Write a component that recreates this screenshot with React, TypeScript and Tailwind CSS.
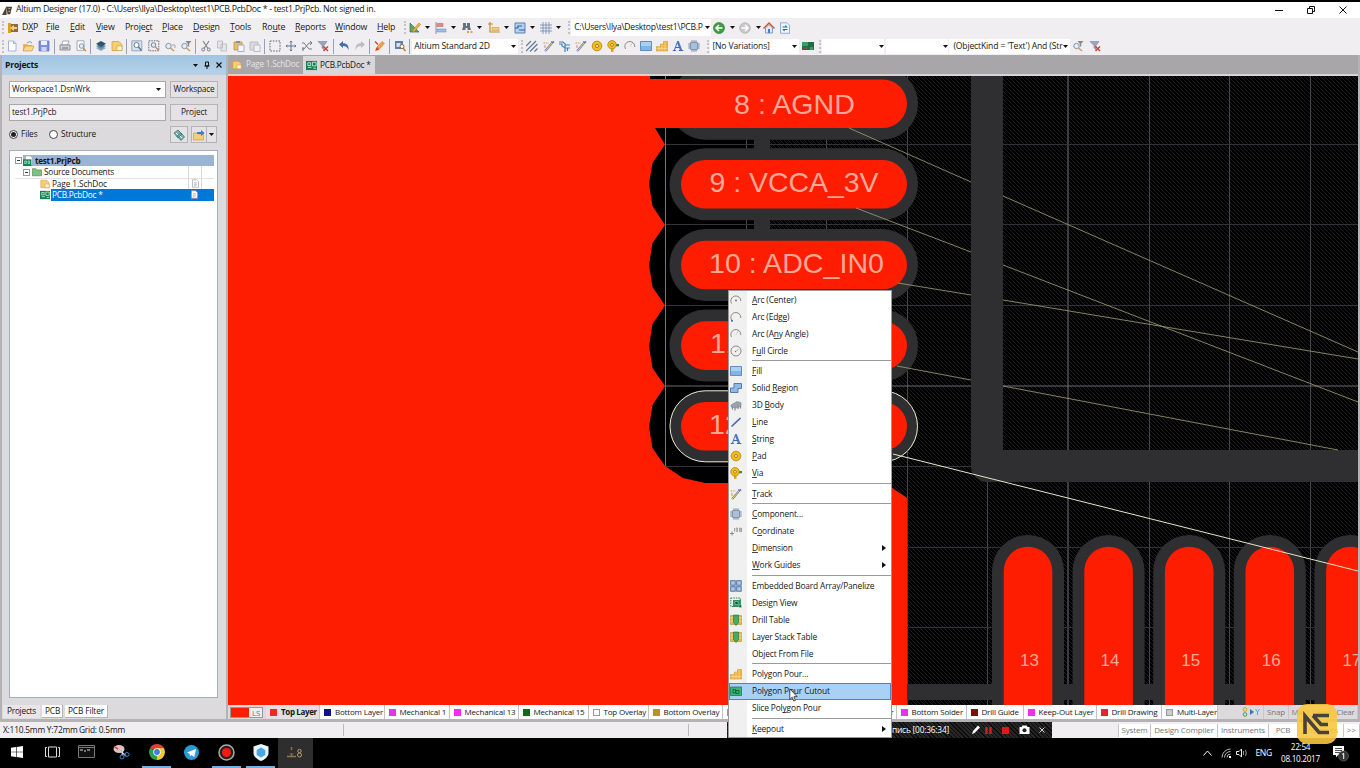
import React from "react";

type Kids = { children?: React.ReactNode };

/* ---------- icon primitives ---------- */

function Ic({ children, s = 12 }: Kids & { s?: number }) {
  return (
    <svg width={s} height={s} viewBox="0 0 12 12" fill="none" className="shrink-0">
      {children}
    </svg>
  );
}

const funnel = <path d="M5.5 1h6l-2.3 2.8v3L7.8 6V3.800z" fill="#888" />;
const mag = (
  <>
    <circle cx="4.500" cy="6" r="2.700" fill="#e3edf7" stroke="#8795a5" />
    <path d="M6.500 8l3.500 3" stroke="#c99f52" strokeWidth="1.500" />
  </>
);

const icons: Record<string, React.ReactNode> = {
  dxp: (
    <>
      <path d="M1 1h3v10H1z" fill="#d8a020" />
      <path d="M4 2h7v8H4z" fill="#8a6a40" />
      <path d="M3 6l4-3v2h3v2H7v2z" fill="#f6d368" />
    </>
  ),
  page: <path d="M2.500 1h5l2.500 2.500V11H2.500zM7.500 1v2.500H10" fill="#fff" stroke="#8ba4cc" strokeWidth=".8" />,
  open: (
    <>
      <path d="M1 4h4l1 1h4v6H1z" fill="#e8b85a" />
      <path d="M3 6h9l-2 5H1z" fill="#f8d98b" stroke="#c48d32" strokeWidth=".6" />
      <path d="M5 3q3-3 5 0" stroke="#6a7fa8" strokeWidth=".8" />
    </>
  ),
  save: (
    <>
      <path d="M1 1h10v10H1z" fill="#7d91dc" stroke="#5f70b8" strokeWidth=".7" />
      <path d="M3 1h6v4H3z" fill="#eef" />
      <path d="M3.500 7h5v4h-5z" fill="#cfd6f4" />
    </>
  ),
  print: (
    <>
      <path d="M4 1h6l-1.500 4h-6z" fill="#fff" stroke="#888" strokeWidth=".7" />
      <path d="M1 5h10v5H1z" fill="#cfd3da" stroke="#6b7078" strokeWidth=".7" />
      <path d="M3 8h6" stroke="#6b7078" />
    </>
  ),
  preview: (
    <>
      <path d="M2 .8h7v9.500H2z" fill="#fff" stroke="#8a97a8" strokeWidth=".8" />
      <circle cx="6.500" cy="6" r="2.300" fill="#dcebf7" stroke="#718098" strokeWidth=".8" />
      <path d="M8 8l3 3" stroke="#b88a4b" strokeWidth="1.300" />
    </>
  ),
  layers: (
    <>
      <path d="M1 8l5-2 5 2-5 3z" fill="#8aa7b9" />
      <path d="M1 6l5-2 5 2-5 3z" fill="#5b8aa5" />
      <path d="M1 3.800L6 1l5 2.800L6 7z" fill="#2f566e" />
    </>
  ),
  sch: (
    <>
      <path d="M1 1.500h7l3 3V10.500H1z" fill="#f6cf74" stroke="#cf9a3c" strokeWidth=".7" />
      <path d="M6 6h5v4.500H6z" fill="#fdf3d6" stroke="#cf9a3c" strokeWidth=".6" />
    </>
  ),
  zoomDoc: (
    <>
      <path d="M.8.8h10v10H.8z" fill="#d5e2f0" stroke="#8499b3" strokeWidth=".8" />
      <circle cx="5.500" cy="5" r="2.500" fill="#fff" stroke="#56708f" strokeWidth=".9" />
      <path d="M7.500 7l3 3.500" stroke="#56708f" strokeWidth="1.300" />
    </>
  ),
  zoomArea: (
    <>
      <path d="M.8.8h10v10H.8z" stroke="#445" strokeWidth=".8" strokeDasharray="1.500 1" />
      <circle cx="5.500" cy="5" r="2.300" fill="#e0eaf4" stroke="#667b92" strokeWidth=".9" />
      <path d="M7.500 7l3 3" stroke="#b88a4b" strokeWidth="1.300" />
    </>
  ),
  zoomSel: (
    <>
      {mag}
      <path d="M8 5h3v3" stroke="#a0a7b0" />
    </>
  ),
  zoomFil: (
    <>
      {mag}
      {funnel}
    </>
  ),
  cut: (
    <>
      <path d="M3 1l5 7.500M9 1L4 8.500" stroke="#7b7f86" strokeWidth="1.100" />
      <circle cx="3.200" cy="9.500" r="1.500" stroke="#7b7f86" />
      <circle cx="8.800" cy="9.500" r="1.500" stroke="#7b7f86" />
    </>
  ),
  copy: <path d="M1.500 1h5v7h-5zM5 4h5.500v7H5z" fill="#e6e6e8" stroke="#b4b6bb" strokeWidth=".8" />,
  paste: (
    <>
      <path d="M1 2h8v8H1z" fill="#e8be66" stroke="#b58a3a" strokeWidth=".7" />
      <path d="M3 1h4v2H3z" fill="#8b8b93" />
      <path d="M5 5h6v6.500H5z" fill="#f4f6fb" stroke="#8b98b0" strokeWidth=".7" />
    </>
  ),
  pasteG: (
    <>
      <path d="M1 2h8v8H1z" fill="#dcdcdf" stroke="#aaacb0" strokeWidth=".7" />
      <path d="M5 5h6v6.500H5z" fill="#f1f1f3" stroke="#a4a7ad" strokeWidth=".7" />
    </>
  ),
  select: <path d="M1 1h10v10H1z" stroke="#556" strokeWidth=".9" strokeDasharray="1.600 1.200" />,
  move: <path d="M6 1v10M1 6h10M4.800 2.300L6 1l1.200 1.300M4.800 9.700L6 11l1.200-1.300M2.300 4.800L1 6l1.300 1.200M9.700 4.800L11 6 9.700 7.200" stroke="#5e7598" strokeWidth="1" />,
  cross: <path d="M1 3h2l5 6h3M1 9h2l5-6h3M9 1l2 2-2 2M2 7v4" stroke="#68727d" strokeWidth=".9" />,
  clearF: (
    <>
      <path d="M1 1.500h9L7 5.500v4L5 8V5.500z" fill="#9ba4be" stroke="#6f7793" strokeWidth=".5" />
      <path d="M6.500 6.500l4.500 4.500M11 6.500L6.500 11" stroke="#d13b3b" strokeWidth="1.400" />
    </>
  ),
  undo: <path d="M1 4.500L5 1v2.200c4 0 6 2.500 5.500 7C9.500 7 8 6 5 6v2z" fill="#3f6fae" />,
  redo: <path d="M11 4.500L7 1v2.200c-4 0-6 2.500-5.500 7C2.500 7 4 6 7 6v2z" fill="#b9bcc2" />,
  pencil: (
    <>
      <path d="M1.500 10.500L3 7l5-5.500 2.500 2L5 9.500z" fill="#f0a73c" stroke="#b5682a" strokeWidth=".5" />
      <path d="M1.500 10.500L3 7l2 2.500z" fill="#d03a2f" />
      <path d="M1 1.500l3 3" stroke="#d03a2f" strokeWidth="1.200" />
    </>
  ),
  browse: (
    <>
      <path d="M1 1h8v8H1z" fill="#5c7fae" />
      <path d="M2.500 3h4v4h-4z" fill="#d6e4f4" />
      <circle cx="8" cy="6.500" r="2" fill="#fff" stroke="#8a6a3a" />
      <path d="M9 8l2.500 3" stroke="#b07a2e" strokeWidth="1.300" />
    </>
  ),
  ruler: (
    <>
      <path d="M1 1v9h9z" fill="#62a86b" stroke="#2f6d45" strokeWidth=".7" />
      <path d="M3 9l7-8 1.500 1.500L5 10z" fill="#f1b13c" stroke="#9a6a1f" strokeWidth=".5" />
    </>
  ),
  align: (
    <>
      <path d="M1 0v12" stroke="#778" strokeWidth=".8" />
      <path d="M2 1.500h6v3H2z" fill="#e38b8b" stroke="#b65858" strokeWidth=".5" />
      <path d="M2 7h9v3H2z" fill="#9fc0e8" stroke="#5f84b5" strokeWidth=".5" />
    </>
  ),
  binoc: (
    <>
      <path d="M2 1h3v3h1V1h3v4l1 3H6.500V6h-2v2H1l1-3z" fill="#64707e" />
      <path d="M6 9h2v2H6zM9.500 9h2v2h-2z" fill="#e0a33b" />
    </>
  ),
  dim: (
    <>
      <path d="M2 0v10h10" stroke="#c58a32" strokeWidth="1.200" />
      <path d="M0 2h5" stroke="#c58a32" />
      <path d="M4 5.500h7v3H4z" fill="#f4cb75" stroke="#c58a32" strokeWidth=".5" />
    </>
  ),
  room: (
    <>
      <path d="M1 1h10v10H1z" fill="#b4d2f0" stroke="#5c82b0" />
      <path d="M1 6h3V4h4M5 8h6" stroke="#336198" strokeWidth="1.100" />
    </>
  ),
  grid: <path d="M3 0v12M6 0v12M9 0v12M0 3h12M0 6h12M0 9h12" stroke="#7791b5" strokeWidth=".9" />,
  back: (
    <>
      <circle cx="6" cy="6" r="5.500" fill="#3f9e42" stroke="#22702a" strokeWidth=".6" />
      <path d="M6 3L3 6l3 3M3 6h6.500" stroke="#fff" strokeWidth="1.500" />
    </>
  ),
  fwd: (
    <>
      <circle cx="6" cy="6" r="5.300" fill="#c9c9cc" stroke="#a4a4a8" strokeWidth=".6" />
      <path d="M6 3l3 3-3 3M9 6H2.500" stroke="#fff" strokeWidth="1.500" />
    </>
  ),
  home: (
    <>
      <path d="M2.500 6v5h7V6L6 2.500z" fill="#dfe9f8" stroke="#5a7bb0" strokeWidth=".7" />
      <path d="M.5 6.500L6 1l5.500 5.500" stroke="#c85a32" strokeWidth="1.400" />
      <path d="M5 7h2v4H5z" fill="#3f7fd0" />
    </>
  ),
  refresh: (
    <>
      <path d="M1.500.8h6.500l2.500 2.500v8h-9z" fill="#eef4fc" stroke="#7d9cc8" strokeWidth=".8" />
      <path d="M3.500 5h4l-1-1.500M8.500 7.500h-4l1 1.500" stroke="#2d67b8" strokeWidth="1.200" />
    </>
  ),
  hatch: <path d="M0 6L5 1M0 11L10 1M4 11.500L11.500 4M8.500 11.500L11.500 8.500" stroke="#5d7799" strokeWidth="1.200" />,
  track: (
    <>
      <path d="M.5 3h5" stroke="#cf9b2f" strokeDasharray="1.500 .8" />
      <path d="M2 11l2-2 5-6 2-1.500" stroke="#6d7f99" strokeWidth="2" />
      <path d="M2 11l2-2 5-6" stroke="#eccb68" strokeWidth="1" />
      <path d="M8 1l1 1M2 5v3" stroke="#cf9b2f" />
    </>
  ),
  diff: <path d="M0 2h4l3 3h4M0 4h3v2l3 2h5M6 5v7M8.500 8v3" stroke="#3f84c0" strokeWidth="1.200" />,
  pad: (
    <>
      <circle cx="6" cy="6" r="4.800" fill="#f4bf1e" stroke="#b07d08" strokeWidth=".8" />
      <circle cx="6" cy="6" r="1.700" fill="#fbe08a" stroke="#a06f08" strokeWidth=".8" />
    </>
  ),
  via: (
    <>
      <path d="M7 4h5v2.300H7z" fill="#3d8c3d" />
      <path d="M4 7h2.500v5H4z" fill="#e5a813" />
      <circle cx="5" cy="4.800" r="4.200" fill="#f4bf1e" stroke="#b07d08" strokeWidth=".8" />
      <circle cx="5" cy="4.800" r="1.500" fill="#fbe08a" stroke="#a06f08" strokeWidth=".8" />
    </>
  ),
  arcC: (
    <>
      <path d="M1.500 9.500A5 5 0 1 1 10.800 7" stroke="#8c7a6c" strokeWidth=".9" />
      <circle cx="6" cy="6.500" r="1" fill="#777" />
    </>
  ),
  arcE: (
    <>
      <path d="M1.500 9A5 5 0 1 1 10.800 7" stroke="#8c7a6c" strokeWidth=".9" />
      <circle cx="2" cy="9.800" r="1.100" fill="#456fb0" />
    </>
  ),
  arcA: (
    <>
      <path d="M1.500 9A5 5 0 1 1 10.800 7" stroke="#8c7a6c" strokeWidth=".9" />
      <path d="M6 6.500L8.500 3" stroke="#999" strokeWidth=".7" strokeDasharray="1 .8" />
    </>
  ),
  circle: (
    <>
      <circle cx="6" cy="6" r="5" stroke="#8c7a6c" strokeWidth=".9" />
      <path d="M6 6.500l2.500-2.500" stroke="#999" strokeWidth=".8" />
      <circle cx="5.500" cy="6.500" r=".7" fill="#777" />
    </>
  ),
  fill: (
    <>
      <path d="M.5 1.500h11v9H.5z" fill="#7fb5ea" stroke="#4a7bb3" strokeWidth=".8" />
      <path d="M1 2h10v4H1z" fill="#a9cff3" />
    </>
  ),
  region: <path d="M4 1.500h7.500v5H8v4H.5V6H4z" fill="#8dbbe9" stroke="#4a6fa3" strokeWidth=".9" />,
  body: (
    <>
      <path d="M1 6l6-3.500 4 1.200v3.500L6 9 1 8z" fill="#97a3af" stroke="#717c87" strokeWidth=".5" />
      <path d="M2.500 8v2.500M5 8.500v3M8 7.500V10M10.500 7v2.500" stroke="#7f8b97" strokeWidth="1.200" />
    </>
  ),
  line: <path d="M1.500 10.500L10.500 2" stroke="#4665a5" strokeWidth="1.700" />,
  string: (
    <>
      <path d="M5.200 1h1.600l3.600 9.500H8L5.300 3.500 2.900 10.500H1.700z" fill="#4f78c4" />
      <path d="M.8 10.500h3M6.800 10.500h4.500M3.500 7.500h4.500" stroke="#3f65b5" strokeWidth="1.100" />
    </>
  ),
  comp: (
    <>
      <path d="M2.500 2.500h7v7h-7z" fill="#a8c0dc" stroke="#7189a6" strokeWidth=".8" />
      <path d="M4 .3v1.900M6 .3v1.900M8 .3v1.900M4 9.800v1.900M6 9.800v1.900M8 9.800v1.900M.3 4h1.900M.3 6h1.900M.3 8h1.900M9.800 4h1.900M9.800 6h1.900M9.800 8h1.900" stroke="#5d7691" strokeWidth=".9" />
    </>
  ),
  coord: (
    <>
      <path d="M0 8.500h4M2 6.500v4" stroke="#777" strokeWidth=".8" />
      <path d="M4.500 3v3.500M6.200 3v3.500h1.300V3zM10.800 3v3.500H9.500V3zM11.500 3v4" stroke="#888" strokeWidth=".7" />
    </>
  ),
  array: (
    <>
      {[0.7, 6.7].map((x) =>
        [0.7, 6.7].map((y) => (
          <rect key={`${x}${y}`} x={x} y={y} width="4.500" height="4.500" fill="#a9c8ea" stroke="#486a96" strokeWidth=".9" />
        ))
      )}
    </>
  ),
  view: (
    <>
      <path d="M.8 1h9.500v8.500H.8z" stroke="#2a6b47" strokeWidth=".9" strokeDasharray="1.500 1" />
      <path d="M3 3h8v7H3z" fill="#2f9361" />
      <path d="M5 4.500h3v3H5zM9 8h2.500v2.500H9z" fill="#0f5233" stroke="#bfe8ce" strokeWidth=".5" />
    </>
  ),
  drill: (
    <>
      <path d="M.5 1.500h11v9H.5z" fill="#e9b548" stroke="#b28125" strokeWidth=".5" />
      <path d="M.5 4h11M.5 7h11" stroke="#fff0c0" strokeWidth=".7" />
      <path d="M3.500 1h5v7.500L6 11.500 3.500 8.500z" fill="#45ad62" stroke="#1e6c38" strokeWidth=".6" />
    </>
  ),
  pour: (
    <>
      <path d="M.5 6.500h4V4h3V1.500h4v9.500H.5z" fill="#f0b440" stroke="#c48a24" strokeWidth=".5" />
      <path d="M3 6v5M6 4v7M9 2v9M.5 8.500h11" stroke="#fbdc97" strokeWidth=".7" />
    </>
  ),
  cutout: (
    <>
      <path d="M.5 2h11v8.500H.5z" fill="#39b377" stroke="#1d7c4b" strokeWidth=".8" />
      <path d="M3 4.500h2.500v3.500H3zM6 5.500h3v3H6z" stroke="#0e5c33" strokeWidth=".8" />
    </>
  ),
  pcb: (
    <>
      <path d="M0 1h12v10H0z" fill="#128255" />
      <path d="M2 3h3v3H2zM7 2.500h4v4H7zM2 8h4M8 9h3" stroke="#d6f2df" strokeWidth=".9" />
    </>
  ),
  pcb2: (
    <>
      <path d="M0 2h12v8H0z" fill="#1f6c49" />
      <path d="M0 2h6v4H0zM8 7h3v3H8z" fill="#3f9b66" />
      <path d="M1 8h5" stroke="#b04545" />
    </>
  ),
  prj: (
    <>
      <path d="M3 0h6l2 2v9H3z" fill="#fff" stroke="#7ba48b" strokeWidth=".7" />
      <path d="M0 4h10v8H0z" fill="#128255" />
      <path d="M2 6h2v3H2zM6 6h2v3H6z" stroke="#d6f2df" strokeWidth=".8" />
    </>
  ),
  folder: <path d="M.5 2h4l1 1.500h6V10.500H.5z" fill="#7fc083" stroke="#4c8a52" strokeWidth=".8" />,
  doc: <path d="M2 1h5.500L10 3.500V11H2zM4 5h4M4 7h4M4 9h3" fill="#fff" stroke="#8d97a8" strokeWidth=".8" />,
  docR: <path d="M2 1h5.500L10 3.500V11H2zM4 5h4M4 7h4M4 9h3" fill="#fff" stroke="#e07878" strokeWidth=".8" />,
  links: (
    <>
      <path d="M1 4l4-3 4 4-4 4zM4 7l4-3 3.500 4L8 11.500z" fill="#7eb0a8" stroke="#2f7a78" strokeWidth=".8" />
      <path d="M3 4l2 2M7 7l2 2" stroke="#fff" />
    </>
  ),
  openTo: (
    <>
      <path d="M.5 4h4l1 1h5v6h-10z" fill="#f3cf7d" stroke="#c4923c" strokeWidth=".6" />
      <path d="M4 3h4V1l3.500 3L8 7V5H4z" fill="#3a7ad0" />
    </>
  ),
};

const I = ({ n, s }: { n: string; s?: number }) => <Ic s={s}>{icons[n]}</Ic>;

/* ---------- small layout pieces ---------- */

const Slot = ({ n }: { n: string }) => (
  <div className="flex w-[16.2px] shrink-0 justify-center">
    <I n={n} />
  </div>
);
const Sep = () => <div className="ml-[1px] mr-[2px] h-[15px] w-px shrink-0 bg-[#8fa3ba]" />;
const Grip = () => <div className="h-[13px] w-[3px] shrink-0 border-l-2 border-dotted border-[#c4c2c4]" />;
const Arrow = () => (
  <svg width="5" height="3" viewBox="0 0 5 3" className="shrink-0">
    <path d="M0 0h5L2.500 3z" fill="#111" />
  </svg>
);

/* "&" precedes the accelerator letter */
function Mn({ t }: { t: string }) {
  const i = t.indexOf("&");
  if (i < 0) return <>{t}</>;
  return (
    <>
      {t.slice(0, i)}
      <span className="underline decoration-[#444] decoration-1 underline-offset-1 [text-decoration-skip-ink:none]">{t[i + 1]}</span>
      {t.slice(i + 2)}
    </>
  );
}

/* ---------- top bars ---------- */

function TitleBar() {
  return (
    <div className="flex h-[16px] shrink-0 items-center bg-white pl-[2px] pr-[13px]">
      <Ic s={11}>
        <path d="M0 11L5 1v10zM5 2h6L9 10H6z" fill="#4a4238" />
        <path d="M7 4h2M7 7h2" stroke="#d8c089" />
      </Ic>
      <span className="ml-[3px] text-[8.800px] tracking-[-0.29px]">
        Altium Designer (17.0) - C:\Users\Ilya\Desktop\test1\PCB.PcbDoc * - test1.PrjPcb. Not signed in.
      </span>
      <div className="ml-auto flex items-center gap-[24px]">
        <svg width="8" height="8"><path d="M0 4.500h8" stroke="#111" /></svg>
        <svg width="8" height="8" fill="none"><path d="M.5 2.500h5v5h-5zM2.500 2.500v-2h5v5h-2" stroke="#111" /></svg>
        <svg width="8" height="8"><path d="M.5.5l7 7M7.500.5l-7 7" stroke="#111" /></svg>
      </div>
    </div>
  );
}

function MenuBar() {
  return (
    <div className="flex h-[19px] shrink-0 items-center bg-[#f0eef0] pl-[2px] text-[8.800px] tracking-[-0.18px]">
      <Grip />
      <div className="ml-[2px] mr-[3px]"><I n="dxp" /></div>
      <span className="w-[24px]"><Mn t="D&XP" /></span>
      <span className="w-[24px]"><Mn t="&File" /></span>
      <span className="w-[26px]"><Mn t="&Edit" /></span>
      <span className="w-[29px]"><Mn t="&View" /></span>
      <span className="w-[37px]"><Mn t="Proje&ct" /></span>
      <span className="w-[31px]"><Mn t="&Place" /></span>
      <span className="w-[37px]"><Mn t="&Design" /></span>
      <span className="w-[32px]"><Mn t="&Tools" /></span>
      <span className="w-[33px]"><Mn t="Ro&ute" /></span>
      <span className="w-[40px]"><Mn t="&Reports" /></span>
      <span className="w-[42px]"><Mn t="&Window" /></span>
      <span className="w-[27px]"><Mn t="&Help" /></span>
      <Grip />
      {["ruler", "align", "binoc", "dim", "room", "grid"].map((n) => (
        <div key={n} className="flex w-[26.2px] shrink-0 items-center gap-[4px] pl-[2px]">
          <I n={n} />
          <Arrow />
        </div>
      ))}
      <div className="ml-[4px]"><Grip /></div>
      <div className="flex h-[17px] w-[140px] shrink-0 items-center justify-between bg-white pl-[3px] pr-[1px]">
        <span className="whitespace-nowrap text-[8.600px] tracking-[-0.24px]">C:\Users\Ilya\Desktop\test1\PCB.P</span>
        <Arrow />
      </div>
      <div className="ml-[2px] flex items-center gap-[4.500px]">
        <I n="back" />
        <Arrow />
        <I n="fwd" />
        <Arrow />
        <div className="-ml-[2px] -mr-[1px]"><I n="home" /></div>
        <I n="refresh" />
      </div>
    </div>
  );
}

function ToolBar() {
  return (
    <div className="flex h-[18px] shrink-0 items-center bg-[#f0eef0] pl-[2px] text-[8.600px] tracking-[-0.15px]">
      <div className="mr-[-1px]"><Grip /></div>
      <Slot n="page" /><Slot n="open" /><Slot n="save" /><Sep />
      <Slot n="print" /><Slot n="preview" /><Sep />
      <Slot n="layers" /><Slot n="sch" /><Sep />
      <Slot n="zoomDoc" /><Slot n="zoomArea" /><Slot n="zoomSel" /><Slot n="zoomFil" /><Sep />
      <Slot n="cut" /><Slot n="copy" /><Slot n="paste" /><Slot n="pasteG" /><Sep />
      <Slot n="select" /><Slot n="move" /><Slot n="cross" /><Slot n="clearF" /><Sep />
      <Slot n="undo" /><Slot n="redo" /><Sep />
      <Slot n="pencil" /><Sep />
      <Slot n="browse" /><Sep />
      <div className="flex h-[15px] w-[106px] shrink-0 items-center justify-between bg-white pl-[2px] pr-[2px]">
        <span>Altium Standard 2D</span>
        <Arrow />
      </div>
      <div className="ml-[3px]"><Grip /></div>
      <Slot n="hatch" /><Slot n="track" /><Slot n="diff" /><Slot n="track" /><Slot n="pad" /><Slot n="via" />
      <Slot n="arcA" /><Slot n="fill" /><Slot n="pour" /><Slot n="string" /><Slot n="comp" />
      <div className="ml-[5px]"><Grip /></div>
      <div className="flex h-[15px] w-[89px] shrink-0 items-center justify-between bg-white pl-[2px] pr-[2px]">
        <span>[No Variations]</span>
        <Arrow />
      </div>
      <div className="ml-[3px]"><I n="pcb2" /></div>
      <div className="ml-[5px]"><Grip /></div>
      <div className="flex h-[15px] w-[62px] shrink-0 items-center justify-end bg-white pr-[0px]"><Arrow /></div>
      <div className="ml-[2px] flex h-[15px] w-[62px] shrink-0 items-center justify-end bg-white pr-[0px]"><Arrow /></div>
      <div className="ml-[1px] flex h-[15px] w-[121px] shrink-0 items-center justify-between bg-white pl-[4px] pr-[2px]">
        <span className="whitespace-nowrap">(ObjectKind = 'Text') And (Str</span>
        <Arrow />
      </div>
      <Slot n="zoomFil" /><Slot n="clearF" />
    </div>
  );
}

/* ---------- projects panel ---------- */

const boxBtn = "flex items-center justify-center border border-[#b5b3b5] bg-[#e4e2e4]";

function Radio({ on }: { on?: boolean }) {
  return (
    <span className="flex size-[9px] shrink-0 items-center justify-center rounded-full border border-[#444] bg-white">
      {on && <span className="size-[5px] rounded-full bg-[#222]" />}
    </span>
  );
}

function Minus() {
  return (
    <span className="flex size-[7px] shrink-0 items-center justify-center border border-[#999] bg-white">
      <span className="h-px w-[3px] bg-[#333]" />
    </span>
  );
}

function Tail({ n }: { n?: string }) {
  return (
    <div className="ml-auto flex h-full w-[26px] shrink-0 border-l border-[#d8d8d8]">
      <div className="flex h-full w-[13px] items-center justify-center border-r border-[#d8d8d8]">{n && <I n={n} s={9} />}</div>
    </div>
  );
}

function Projects() {
  return (
    <div className="flex w-[228px] shrink-0 flex-col border-l-2 border-r-2 border-[#b4b2b4] bg-[#dcdadc] text-[8.300px] tracking-[-0.12px]">
      <div className="flex h-[20px] shrink-0 items-center bg-gradient-to-b from-[#9fc5e2] to-[#b7d2e7] pl-[3px] pr-[4px]">
        <span className="text-[8.600px] font-bold tracking-[-0.2px]">Projects</span>
        <div className="ml-auto flex items-center gap-[6px]">
          <Arrow />
          <svg width="6" height="8" fill="none"><path d="M1.500 1h3v4h-3zM.5 5h5M3 5v3" stroke="#111" /></svg>
          <svg width="6" height="6"><path d="M.5.5l5 5M5.500.5l-5 5" stroke="#111" strokeWidth="1.200" /></svg>
        </div>
      </div>
      <div className="flex min-h-0 flex-1 flex-col pl-[7px] pr-[8px] pt-[6px]">
        <div className="flex h-[17px] gap-[4px]">
          <div className="flex w-[157px] items-center justify-between border border-[#a9a7a9] bg-white pl-[2px] pr-[4px]">
            Workspace1.DsnWrk <Arrow />
          </div>
          <div className={`w-[48px] tracking-[-0.2px] ${boxBtn}`}>Workspace</div>
        </div>
        <div className="mt-[6px] flex h-[17px] gap-[4px]">
          <div className="flex w-[157px] items-center border border-[#a9a7a9] bg-[#f3f1f3] pl-[2px]">test1.PrjPcb</div>
          <div className={`w-[48px] ${boxBtn}`}>Project</div>
        </div>
        <div className="mt-[5px] flex h-[17px] items-center">
          <Radio on />
          <span className="ml-[3px] w-[28px]">Files</span>
          <Radio />
          <span className="ml-[3px] w-[109px]">Structure</span>
          <div className={`h-[17px] w-[18px] ${boxBtn}`}><I n="links" /></div>
          <div className={`ml-[3px] h-[17px] w-[16px] ${boxBtn}`}><I n="openTo" /></div>
          <div className={`-ml-px h-[17px] w-[11px] ${boxBtn}`}><Arrow /></div>
        </div>
        <div className="mt-[7px] h-[548px] border border-[#9fb0c4] bg-white py-[4px] pl-[5px] pr-[3px]">
          <div className="flex h-[11.400px] items-center">
            <Minus />
            <div className="ml-[1px] flex h-full flex-1 items-center bg-[#9bb4d4]">
              <I n="prj" s={10} />
              <span className="ml-[2px] text-[8.100px] font-bold tracking-[-0.25px]">test1.PrjPcb</span>
            </div>
          </div>
          <div className="flex h-[11.400px] items-center pl-[8px]">
            <Minus />
            <div className="ml-[2px]"><I n="folder" s={10} /></div>
            <span className="ml-[2px] tracking-[-0.2px]">Source Documents</span>
            <Tail />
          </div>
          <div className="flex h-[11.400px] items-center border-t border-[#e2e2e2] pl-[25px]">
            <I n="sch" s={10} />
            <span className="ml-[2px]">Page 1.SchDoc</span>
            <Tail n="doc" />
          </div>
          <div className="flex h-[11.400px] items-center pl-[25px]">
            <I n="pcb" s={10} />
            <div className="ml-px flex h-full flex-1 items-center bg-[#0078d7] text-white">
              <span className="ml-[1px] tracking-[-0.25px]">PCB.PcbDoc *</span>
              <div className="ml-auto mr-[15px]"><I n="docR" s={9} /></div>
            </div>
          </div>
        </div>
        <div className="-ml-[6px] mt-[7px] flex h-[13px] items-stretch gap-[2px] leading-[12px]">
          <div className="w-[37px] bg-[#e8e6e8] pl-[4px] tracking-[-0.25px]">Projects</div>
          <div className="w-[21px] border-b border-r border-[#b5b3b5] bg-white pl-[3px]">PCB</div>
          <div className="w-[43px] border-b border-r border-[#b5b3b5] bg-white pl-[3px]">PCB Filter</div>
        </div>
      </div>
    </div>
  );
}

/* ---------- PCB drawing ---------- */

const rows = [103.7, 184.3, 265, 345.6, 426.3];
const cols = [1028, 1108.6, 1189.2, 1269.8, 1350.4];

function Board() {
  return (
    <svg viewBox="228 76 1130 629" width="1130" height="629" className="block shrink-0" fontFamily="'Liberation Sans', Arial, sans-serif">
      <defs>
        <pattern id="hatch" width="4" height="4" patternUnits="userSpaceOnUse">
          <path d="M-1 -1L5 5M3 -1l2 2M-1 3l2 2" stroke="#232326" strokeWidth=".8" />
        </pattern>
      </defs>
      <rect x="228" y="76" width="1130" height="629" fill="#000" />
      <rect x="770" y="76" width="588" height="629" fill="url(#hatch)" />
      <path d="M746.500 76v400M826.500 76v400M907.500 76v629M987.500 76v629M1149.500 76v629M1229.500 76v629M1310.500 76v629" stroke="#46464a" />
      <path d="M1068 76v629" stroke="#55555a" strokeWidth="1.400" />
      <path d="M665 144.500h693M665 224.500h693M665 305.500h693M665 466.500h693M907 547.500h451M907 627.500h451" stroke="#333339" />
      <path d="M665 386h693" stroke="#6a6a6e" strokeWidth="1.200" />
      <rect x="754" y="76" width="16" height="400" fill="#2f2f31" />
      <path d="M987 76V466H1358" fill="none" stroke="#2f2f31" strokeWidth="32" strokeLinejoin="round" />
      <rect x="907" y="684" width="451" height="16" fill="#2f2f31" />

      {rows.map((y) => (
        <rect key={y} x="669.500" y={y - 36} width="248.500" height="72" rx="36" fill="#2f2f31" />
      ))}
      {cols.map((x) => (
        <path key={x} d={`M${x - 36} 705V571a36 36 0 0 1 72 0V705z`} fill="#2f2f31" />
      ))}

      <path
        d="M228 76H650V79H700V128H655L665 144.500 652.500 163 649 184 652.500 206 665 225 652.500 243 649 265 652.500 287 665 305.500 652.500 324 649 346 652.500 368 665 386 652.500 405 649 427 652.500 448 665 466 683 478 705 483H885L907 498V705H228z"
        fill="#ff1d00"
      />
      <path d="M665.500 76v3M665.500 128v338" stroke="#77777b" />

      {rows.map((y) => (
        <rect key={y} x="681" y={y - 24.3} width="226" height="48.600" rx="24.300" fill="#ff1d00" />
      ))}
      <rect x="681" y="79.400" width="40" height="48.600" fill="#ff1d00" />
      {cols.map((x) => (
        <path key={x} d={`M${x - 24.3} 705V571a24.300 24.300 0 0 1 48.600 0V705z`} fill="#ff1d00" />
      ))}
      <rect x="670" y="390.800" width="247.500" height="71" rx="35.500" fill="none" stroke="#e8e8c8" />

      <g stroke="#a3a276" strokeWidth=".8">
        <path d="M849 128L971 182M1003 196L1358 352" />
        <path d="M856 208L971 252M1003 265L1358 402" />
        <path d="M898 283L971 295M1003 300L1358 359" />
        <path d="M897 366L971 380M1003 386L1338 450" />
      </g>
      <path d="M893 454L1358 571" stroke="#e4e4c4" />

      <g fill="#ffa898" fontSize="28.500">
        <text x="734" y="113.500" textLength="121" lengthAdjust="spacingAndGlyphs">8 : AGND</text>
        <text x="709.500" y="191.500" textLength="169" lengthAdjust="spacingAndGlyphs">9 : VCCA_3V</text>
        <text x="709" y="273" textLength="175" lengthAdjust="spacingAndGlyphs">10 : ADC_IN0</text>
        <text x="710" y="353" className="[font-kerning:none]">11 : ADC_IN1</text>
        <text x="709" y="434" className="[font-kerning:none]">12 : ADC_IN2</text>
      </g>
      <g fill="#ffa898" fontSize="17">
        {cols.map((x, i) => (
          <text key={x} x={x - 8} y="666">{13 + i}</text>
        ))}
      </g>
    </svg>
  );
}

/* ---------- layer strip ---------- */

const Sw = ({ c }: { c: string }) => <span className={`size-[7px] shrink-0 ${c}`} />;
const ltab = "flex h-full shrink-0 items-center gap-[4px] border-r border-[#c4c2c4] pl-[4px] whitespace-nowrap overflow-hidden";
const gbtn = "flex h-full shrink-0 items-center justify-center whitespace-nowrap border-r border-[#c8c6c8] text-[#777]";

function LayerStrip() {
  return (
    <div className="flex h-[14px] shrink-0 items-center bg-[#dcdadc] text-[8px] tracking-[-0.18px]">
      <div className="ml-[2px] mr-[3px] flex h-[11px] w-[33px] border border-[#999] bg-[#eee]">
        <div className="w-[18px] bg-[#ff1d00]" />
        <span className="pl-[3px] leading-[10px] text-[#777]">LS</span>
      </div>
      <div className={`w-[54px] bg-[#e2e0e2] font-bold tracking-[-0.35px] ${ltab}`}><Sw c="bg-[#ee2a1a]" />Top Layer</div>
      <div className={`w-[64.500px] bg-white ${ltab}`}><Sw c="bg-[#10108a]" />Bottom Layer</div>
      <div className={`w-[65px] bg-white ${ltab}`}><Sw c="bg-[#f02ef0]" />Mechanical 1</div>
      <div className={`w-[69px] bg-white ${ltab}`}><Sw c="bg-[#f02ef0]" />Mechanical 13</div>
      <div className={`w-[70px] bg-white ${ltab}`}><Sw c="bg-[#0a6e12]" />Mechanical 15</div>
      <div className={`w-[60px] bg-white ${ltab}`}><Sw c="border border-[#999] bg-white" />Top Overlay</div>
      <div className={`w-[74px] bg-white ${ltab}`}><Sw c="bg-[#b8941c]" />Bottom Overlay</div>
      <div className={`w-[55px] bg-white ${ltab}`}><Sw c="bg-[#999]" />Top Paste</div>
      <div className={`w-[65px] bg-white ${ltab}`}><Sw c="bg-[#800]" />Bottom Paste</div>
      <div className={`w-[54px] justify-end bg-white pr-[2px] ${ltab}`}>Top Solder</div>
      <div className={`w-[70px] bg-white ${ltab}`}><Sw c="bg-[#f02ef0]" />Bottom Solder</div>
      <div className={`w-[57px] bg-white ${ltab}`}><Sw c="bg-[#7a1010]" />Drill Guide</div>
      <div className={`w-[73px] bg-white ${ltab}`}><Sw c="bg-[#f02ef0]" />Keep-Out Layer</div>
      <div className={`w-[65.500px] bg-white ${ltab}`}><Sw c="bg-[#f01e2e]" />Drill Drawing</div>
      <div className={`w-[56px] bg-white ${ltab}`}><Sw c="border border-[#999] bg-[#ccc]" />Multi-Layer</div>
      <div className="ml-auto flex h-full">
        <div className={`w-[24px] ${gbtn}`}>
          <svg width="19" height="10" viewBox="0 0 19 10" fill="none">
            <circle cx="3" cy="2.500" r="1.800" stroke="#d0a020" />
            <circle cx="3" cy="7.500" r="1.800" stroke="#4a9a4a" />
            <path d="M8 2l4 3-4 3z" fill="#2f78c8" />
            <path d="M13.500 2l2 3 2-3M15.500 5v3" stroke="#6f9fc8" />
          </svg>
        </div>
        <div className={`w-[25px] ${gbtn}`}>Snap</div>
        <div className={`w-[45px] ${gbtn}`}>Mask Level</div>
        <div className={`w-[24px] ${gbtn}`}>Clear</div>
      </div>
    </div>
  );
}

/* ---------- bottom bars ---------- */

function StatusBar() {
  return (
    <div className="flex h-[16px] shrink-0 items-center bg-[#f0eef0] pl-[3px] text-[8.400px] tracking-[-0.22px]">
      <span className="w-[76px] shrink-0 whitespace-nowrap">X:110.5mm Y:72mm</span>
      <span className="w-[264px] shrink-0">Grid: 0.5mm</span>
      <div className="h-[12px] w-[345px] shrink-0 border-l border-[#bbb]" />
      <div className="h-[12px] w-[39px] shrink-0 border-l border-[#bbb]" />
      <div className="flex h-full w-[325px] shrink-0 items-center justify-end bg-[repeating-linear-gradient(45deg,#0c0c0c_0_1px,#262626_1px_3px)] pr-[5px] text-white">
        <span className="mr-[22px] whitespace-nowrap">Запись [00:36:34]</span>
        <svg width="76" height="12" viewBox="0 0 76 12" fill="none">
          <path d="M1 10l1-3 5-5.500 2 2L3.500 9z" fill="#fff" />
          <path d="M15.500 3v7M19.500 3v7" stroke="#e01818" strokeWidth="2.500" />
          <path d="M31 3h7v7h-7z" fill="#e01818" />
          <path d="M48.500 3h2l1-1.500h4l1 1.500h2V10h-10z" fill="#fff" />
          <circle cx="53.500" cy="6.300" r="2" fill="#222" />
          <path d="M68.500 3.500l5 5M73.500 3.500l-5 5" stroke="#ccc" />
        </svg>
      </div>
      <div className="ml-auto flex h-[13px] bg-white text-[8px] leading-[12px] tracking-[-0.12px]">
        <div className={`w-[33px] border-l ${gbtn}`}>System</div>
        <div className={`w-[67px] ${gbtn}`}>Design Compiler</div>
        <div className={`w-[51px] ${gbtn}`}>Instruments</div>
        <div className={`w-[29px] ${gbtn}`}>PCB</div>
        <div className={`w-[46px] ${gbtn}`}>Shortcuts</div>
        <div className={`w-[16px] ${gbtn}`}>&gt;&gt;</div>
      </div>
    </div>
  );
}

function TaskSlot({ children, open, active }: Kids & { open?: boolean; active?: boolean }) {
  return (
    <div className={`flex h-full w-[34.800px] shrink-0 flex-col items-center justify-between ${active ? "bg-[#2e2e2f]" : ""}`}>
      <div className="flex flex-1 items-center">{children}</div>
      <div className={`h-[2px] ${open ? "w-[29px] bg-[#76aede]" : ""}`} />
    </div>
  );
}

function TaskBar() {
  return (
    <div className="flex h-[30px] shrink-0 items-center bg-black text-[9px] text-white">
      <TaskSlot>
        <svg width="12" height="12"><path d="M0 1.700l5-.7v4.700H0zM5.600.9L12 0v5.700H5.600zM0 6.300h5V11l-5-.7zM5.600 6.300H12V12l-6.400-.9z" fill="#fff" /></svg>
      </TaskSlot>
      <TaskSlot>
        <svg width="15" height="12" fill="none"><path d="M3.500 1h8v10h-8zM2 1.500H.5v9H2M13 1.500h1.500v9H13" stroke="#ddd" /></svg>
      </TaskSlot>
      <TaskSlot>
        <svg width="17" height="14" fill="none"><path d="M.5.5h16v12H.5z" fill="#111" stroke="#777" /><path d="M1 2.500h15" stroke="#777" /><path d="M2 5h3M6 6h2M9 5h3" stroke="#ddd" /></svg>
      </TaskSlot>
      <TaskSlot>
        <svg width="17" height="16" fill="none">
          <ellipse cx="6" cy="5" rx="5.500" ry="4" fill="#e5c0c0" />
          <path d="M2 3l7 5" stroke="#c33" strokeWidth="1.500" />
          <path d="M5 5l8 7M10 5l-1 6" stroke="#d0dce8" strokeWidth="1.200" />
          <circle cx="9" cy="13" r="2" stroke="#3f83c8" /><circle cx="14" cy="10.500" r="2" stroke="#3f83c8" />
        </svg>
      </TaskSlot>
      <TaskSlot open>
        <svg width="16" height="16" viewBox="0 0 16 16">
          <path d="M8 8L1.100 4A8 8 0 0 1 14.900 4z" fill="#e0402f" />
          <path d="M8 8V16A8 8 0 0 1 1.100 4z" fill="#2f9e4c" />
          <path d="M8 8L14.900 4A8 8 0 0 1 8 16z" fill="#f7c92b" />
          <path d="M8 4h7l-3 5z" fill="#f7c92b" />
          <path d="M8 4h6.900L14 3H8z" fill="#e0402f" />
          <circle cx="8" cy="8" r="3.700" fill="#fff" /><circle cx="8" cy="8" r="2.900" fill="#3e7de0" />
        </svg>
      </TaskSlot>
      <TaskSlot>
        <svg width="15" height="15"><circle cx="7.500" cy="7.500" r="7.500" fill="#2a9bd8" /><path d="M3 7.500L12 4l-1.700 8-3-2-1.300 1.500-.3-2.700z" fill="#fff" /></svg>
      </TaskSlot>
      <TaskSlot open>
        <svg width="17" height="17" fill="none"><circle cx="8.500" cy="8.500" r="7.500" fill="#222" stroke="#aaa" strokeWidth="1.500" /><circle cx="8.500" cy="8.500" r="4.600" fill="#f01c10" /></svg>
      </TaskSlot>
      <TaskSlot open>
        <svg width="16" height="17"><path d="M8 0l7.500 2.500V9C15.500 13 11 16 8 17 5 16 .5 13 .5 9V2.500z" fill="#e9f4fc" /><path d="M8 3.500l4.300 2.400v5L8 13.400l-4.300-2.500v-5z" fill="#46a7e4" /></svg>
      </TaskSlot>
      <TaskSlot active>
        <svg width="17" height="12" viewBox="0 0 17 12" fill="none">
          <path d="M0 10.500h9M4.500 7v3M4.500 1v3" stroke="#8f7750" strokeWidth="1.400" />
          <path d="M2.500 8h4" stroke="#6d5b3e" />
          <circle cx="12.500" cy="5" r="1.700" stroke="#b99a68" />
          <circle cx="12.500" cy="9" r="2" stroke="#b99a68" />
        </svg>
      </TaskSlot>
      <div className="ml-auto flex h-full items-center pr-[11px]">
        <svg width="9" height="6" fill="none"><path d="M.5 5.500l4-4.500 4 4.500" stroke="#fff" /></svg>
        <svg className="ml-[9px]" width="10" height="10" fill="none"><path d="M1 9.500A8.500 8.500 0 0 1 9.500 1M3.500 9.500a6 6 0 0 1 6-6M6 9.500a3.500 3.500 0 0 1 3.500-3.500" stroke="#bbb" /><path d="M8 9h2" stroke="#fff" strokeWidth="2" /></svg>
        <svg className="ml-[5px]" width="12" height="10" fill="none"><path d="M.5 3.500H3l2.500-2.500v8L3 6.500H.5z" stroke="#eee" /><path d="M7.500 3v4M9.500 2q1.500 3 0 6" stroke="#999" /></svg>
        <span className="ml-[7px] text-[8.600px] tracking-[-0.300px]">ENG</span>
        <div className="ml-[9px] w-[39px] text-center text-[8.200px] leading-[12px] tracking-[-0.300px]">
          22:54<br />08.10.2017
        </div>
        <svg className="ml-[12px]" width="17" height="18" fill="none">
          <path d="M1 2h11v9H6l-2 2.500V11H1z" fill="#fff" />
          <path d="M3 4.500h7M3 6.500h7M3 8.500h5" stroke="#222" strokeWidth=".8" />
          <circle cx="11.500" cy="12" r="5" fill="#333" stroke="#666" strokeWidth=".7" />
          <path d="M10 10.500l1.700-1.200V15" stroke="#fff" strokeWidth="1" />
        </svg>
      </div>
    </div>
  );
}

/* ---------- place menu ---------- */

type Item = [string, string?, boolean?];
const groups: Item[][] = [
  [["&Arc (Center)", "arcC"], ["Arc (Edg&e)", "arcE"], ["Arc (A&ny Angle)", "arcA"], ["F&ull Circle", "circle"]],
  [["&Fill", "fill"], ["Solid &Region", "region"], ["3D &Body", "body"], ["&Line", "line"], ["&String", "string"], ["&Pad", "pad"], ["&Via", "via"]],
  [["&Track", "track"]],
  [["&Component...", "comp"], ["C&oordinate", "coord"], ["&Dimension", undefined, true], ["&Work Guides", undefined, true]],
  [["Embedded Board Array/Panelize", "array"], ["Design View", "view"], ["Drill Table", "drill"], ["Layer Stack Table", "drill"], ["Object From File"]],
  [["Polygon Pour...", "pour"], ["Polygon Pour Cutout", "cutout"], ["Slice Pol&ygon Pour"]],
  [["&Keepout", undefined, true]],
];

function PlaceMenu() {
  return (
    <div className="absolute left-[728px] top-[290px] w-[164px] border border-[#999] bg-[linear-gradient(to_right,#f1f0f1_18px,#fff_18px)] text-[8.400px] tracking-[-0.150px]">
      {groups.map((g, gi) => (
        <div key={gi}>
          {gi > 0 && (
            <div className="flex h-[3.500px] items-center pl-[23px]">
              <div className="h-px w-full bg-[#9a9a9a]" />
            </div>
          )}
          {g.map(([t, n, sub]) => (
            <div
              key={t}
              className={`flex h-[17px] items-center pl-[1px] pr-[5px] ${t.endsWith("Cutout") ? "bg-[#a9d1f5] outline outline-1 -outline-offset-1 outline-[#4a86c4]" : ""}`}
            >
              <div className="flex w-[12px] shrink-0">{n && <I n={n} />}</div>
              <span className="ml-[10px] flex-1 whitespace-nowrap pt-[1px]"><Mn t={t} /></span>
              {sub && <svg width="4" height="6"><path d="M0 0l4 3-4 3z" fill="#111" /></svg>}
            </div>
          ))}
        </div>
      ))}
    </div>
  );
}

export default function App() {
  return (
    <div className="relative flex h-[768px] w-[1360px] flex-col overflow-hidden bg-black pt-[2px] font-['Open_Sans','Noto_Sans',sans-serif] text-[#161616]">
      <TitleBar />
      <MenuBar />
      <ToolBar />
      <div className="flex h-[664px] shrink-0">
        <Projects />
        <div className="flex w-[1132px] shrink-0 flex-col border-r-2 border-[#b4b2b4]">
          <div className="flex h-[19px] shrink-0 items-center bg-[#a8a6a8] pl-[4px] text-[8.200px] tracking-[-0.180px]">
            <I n="sch" s={10} />
            <span className="ml-[4px] w-[57px] whitespace-nowrap text-[#e6e4e6]">Page 1.SchDoc</span>
            <div className="flex h-[18px] items-center self-end bg-[#d9d7d9] pl-[3px] pr-[4px]">
              <I n="pcb" s={11} />
              <span className="ml-[3px] whitespace-nowrap">PCB.PcbDoc *</span>
            </div>
          </div>
          <div className="flex h-[2px] shrink-0">
            <div className="w-[420px] bg-[#f7c8bc]" />
            <div className="flex-1 bg-[#d6d4d8]" />
          </div>
          <Board />
          <LayerStrip />
        </div>
      </div>
      <div className="h-[3px] shrink-0 bg-[#b4b2b4]" />
      <StatusBar />
      <TaskBar />

      <PlaceMenu />
      <svg className="absolute left-[789px] top-[688px]" width="9" height="14" viewBox="0 0 9 14">
        <path d="M.8.800V11.500L3.200 9.200 4.700 13l1.700-.7L4.900 8.700H8.200z" fill="#fff" stroke="#222" strokeWidth=".8" />
      </svg>
      <svg className="absolute left-[1297px] top-[704px]" width="40" height="40" viewBox="0 0 40 40" fill="none">
        <rect width="40" height="40" rx="10" fill="#f7c83e" fillOpacity=".9" />
        <path d="M8 30V12L22 28.500H32M16 11.500H32M16 11.500L24 20.500H31" stroke="#47433a" strokeWidth="3.600" />
      </svg>
    </div>
  );
}
